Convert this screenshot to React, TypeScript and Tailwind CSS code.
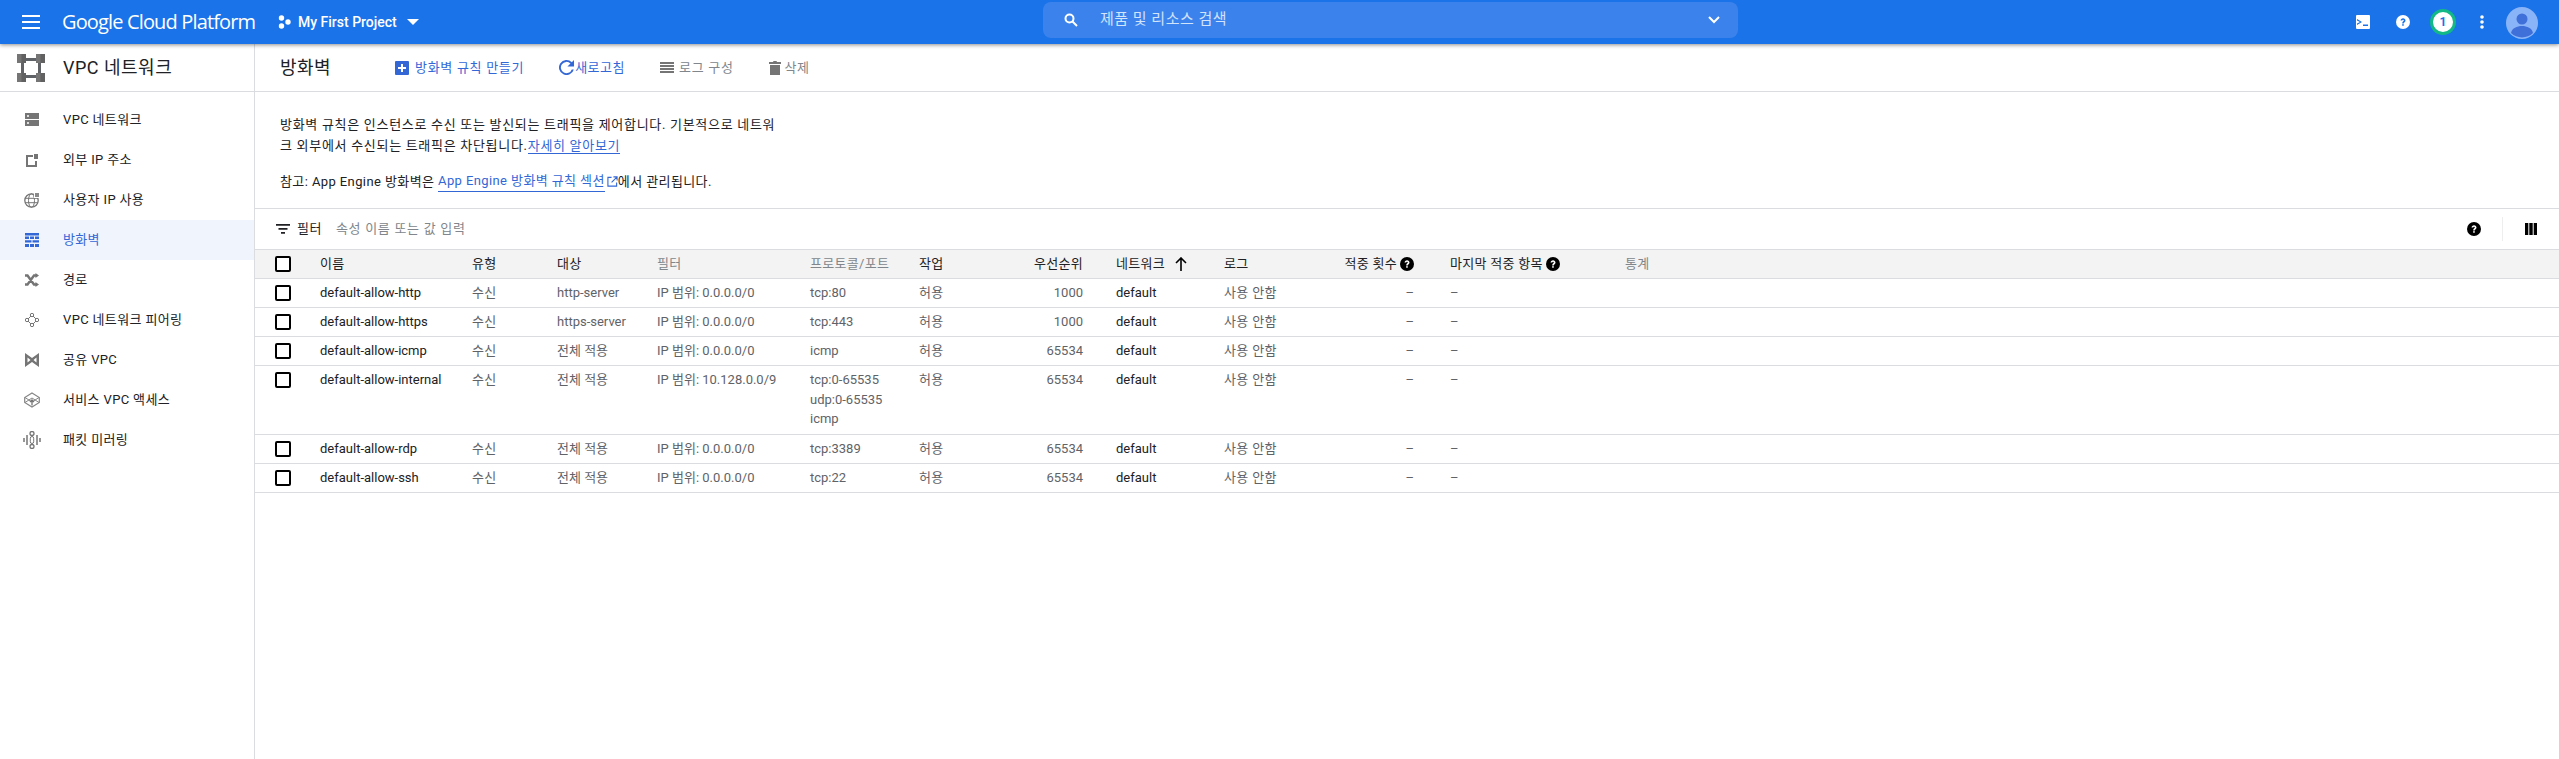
import React from "react";

const font = "font-['Roboto','Noto_Sans_CJK_KR',sans-serif]";
const gridCols = "grid grid-cols-[65px_152px_85px_100px_153px_109px_85px_79px_141px_100px_90px_211px_1fr]";

const Svg = ({ s = 16, vb = "0 0 16 16", c = "", children }: { s?: number; vb?: string; c?: string; children: React.ReactNode }) => (
  <svg width={s} height={s} viewBox={vb} className={`shrink-0 ${c}`}>{children}</svg>
);

const Help = ({ s = 14, fg = "#000", q = "#fff" }: { s?: number; fg?: string; q?: string }) => (
  <svg width={s} height={s} viewBox="0 0 24 24" className="shrink-0">
    <circle cx="12" cy="12" r="12" fill={fg} />
    <path d="M7.800 9.600c0-2.400 1.900-4.200 4.300-4.200s4.200 1.700 4.200 3.900c0 2.800-3 3-3 5.300h-2.700c0-3.400 2.800-3.400 2.800-5.100 0-.9-.5-1.500-1.300-1.500s-1.400.7-1.400 1.600H7.800z" fill={q} />
    <rect x="10.600" y="15.700" width="2.700" height="2.700" fill={q} />
  </svg>
);

const icons: React.ReactNode[] = [
  <Svg key="1" s={14} vb="0 0 14 14">
    <path fillRule="evenodd" d="M0 0h14v6H0zM3 2a1 1 0 1 0 0 2 1 1 0 0 0 0-2zM0 7h14v6H0zM3 9a1 1 0 1 0 0 2 1 1 0 0 0 0-2z" fill="#757575" />
  </Svg>,
  <Svg key="2" s={14} vb="0 0 14 14">
    <path d="M1 2h7v2H3v8h7V8h2v6H1z" fill="#757575" />
    <rect x="9" y="1" width="4" height="5" fill="#757575" />
  </Svg>,
  <Svg key="3" s={16} vb="0 0 16 16">
    <circle cx="7.500" cy="8.500" r="6.700" fill="none" stroke="#757575" strokeWidth="1.300" />
    <ellipse cx="7.500" cy="8.500" rx="3" ry="6.700" fill="none" stroke="#757575" />
    <path d="M1 6.300h13M1 10.700h13" stroke="#757575" />
    <rect x="10" y="0.500" width="5.500" height="5.500" fill="#fff" />
    <rect x="11" y="1" width="4" height="4" fill="#8a8a8a" />
  </Svg>,
  <Svg key="4" s={14} vb="0 0 14 14">
    <path d="M0 0h14v2.400H0zM0 3.600h4v2.400H0zM5 3.600h4v2.400H5zM10 3.600h4v2.400h-4zM0 7.200h6.500v2.400H0zM7.500 7.200H14v2.400H7.500zM0 11h4v3H0zM5 11h4v3H5zM10 11h4v3h-4z" fill="#3367d6" />
  </Svg>,
  <Svg key="5" s={14} vb="0 0 14 14">
    <path d="M0 2.500h2.500L9 11.500h2M0 11.500h2.500L9 2.500h2" fill="none" stroke="#757575" strokeWidth="2.400" />
    <path d="M10.500 0 14 2.500 10.500 5zM10.500 9 14 11.500 10.500 14z" fill="#757575" />
  </Svg>,
  <Svg key="6" s={14} vb="0 0 14 14">
    <path d="M7 2 12 7 7 12 2 7z" fill="none" stroke="#757575" />
    <circle cx="7" cy="2" r="1.700" fill="#fff" stroke="#757575" />
    <circle cx="12" cy="7" r="1.700" fill="#fff" stroke="#757575" />
    <circle cx="7" cy="12" r="1.700" fill="#fff" stroke="#757575" />
    <circle cx="2" cy="7" r="1.700" fill="#fff" stroke="#757575" />
  </Svg>,
  <Svg key="7" s={14} vb="0 0 14 14">
    <path fillRule="evenodd" d="M0 0 7 5 14 0v14L7 9 0 14zM2.500 4.500v5L5.500 7zM11.500 4.500 8.500 7l3 2.500z" fill="#757575" />
  </Svg>,
  <Svg key="8" s={16} vb="0 0 16 16">
    <path d="M8 1 15.300 5.500v5L8 15 .7 10.500v-5z" fill="none" stroke="#858585" strokeWidth="1.200" />
    <path d="M1 5.500 8 10l7-4.500M1 10.500 8 6l7 4.500" fill="none" stroke="#858585" strokeWidth="1" />
    <path d="M8 13.500V8M6 10l2-2 2 2" fill="none" stroke="#757575" strokeWidth="1.300" />
  </Svg>,
  <Svg key="9" s={18} vb="0 0 18 18">
    <circle cx="9" cy="2.500" r="2" fill="none" stroke="#757575" strokeWidth="1.300" />
    <circle cx="9" cy="15.500" r="2" fill="none" stroke="#757575" strokeWidth="1.300" />
    <rect x="7.300" y="5.500" width="3.400" height="7" rx="1.700" fill="none" stroke="#757575" />
    <path d="M1 7v4M4 4v10M14 4v10M17 7v4" stroke="#757575" strokeWidth="1.500" />
  </Svg>,
];

const navItems = ["VPC 네트워크", "외부 IP 주소", "사용자 IP 사용", "방화벽", "경로", "VPC 네트워크 피어링", "공유 VPC", "서비스 VPC 액세스", "패킷 미러링"];

type Row = { name: string; target: string; filter: string; proto: string[]; pr: string };
const rows: Row[] = [
  { name: "default-allow-http", target: "http-server", filter: "IP 범위: 0.0.0.0/0", proto: ["tcp:80"], pr: "1000" },
  { name: "default-allow-https", target: "https-server", filter: "IP 범위: 0.0.0.0/0", proto: ["tcp:443"], pr: "1000" },
  { name: "default-allow-icmp", target: "전체 적용", filter: "IP 범위: 0.0.0.0/0", proto: ["icmp"], pr: "65534" },
  { name: "default-allow-internal", target: "전체 적용", filter: "IP 범위: 10.128.0.0/9", proto: ["tcp:0-65535", "udp:0-65535", "icmp"], pr: "65534" },
  { name: "default-allow-rdp", target: "전체 적용", filter: "IP 범위: 0.0.0.0/0", proto: ["tcp:3389"], pr: "65534" },
  { name: "default-allow-ssh", target: "전체 적용", filter: "IP 범위: 0.0.0.0/0", proto: ["tcp:22"], pr: "65534" },
];

const Check = () => <div className="ml-5 h-4 w-4 rounded-[2px] border-2 border-black bg-white" />;

export default function App() {
  return (
    <div className={`${font} flex h-[759px] w-[2559px] flex-col overflow-hidden bg-white text-[13px] text-[#202124]`}>
      <header className="relative z-10 flex h-11 shrink-0 items-center bg-[#1a73e8] text-white shadow-[0_1px_4px_rgba(0,0,0,0.45)]">
        <div className="flex w-[1043px] shrink-0 items-center">
          <svg width="18" height="14" viewBox="0 0 18 14" className="ml-[22px]"><path d="M0 0h18v2H0zM0 6h18v2H0zM0 12h18v2H0z" fill="#fff" /></svg>
          <span className="ml-[22px] w-[192px] text-[20px] leading-6 font-['Open_Sans',sans-serif] tracking-[-0.85px] whitespace-nowrap">Google Cloud Platform</span>
          <svg width="14" height="14" viewBox="0 0 14 14" className="ml-6"><circle cx="3.500" cy="3" r="2.700" fill="#fff" /><circle cx="3.500" cy="11" r="2.700" fill="#fff" /><circle cx="10" cy="7" r="2.700" fill="#fff" /></svg>
          <span className="ml-[6px] text-[14px] font-medium whitespace-nowrap">My First Project</span>
          <svg width="12" height="6" viewBox="0 0 12 6" className="ml-[10px]"><path d="M0 0h12L6 6z" fill="#fff" /></svg>
        </div>
        <div className="mb-[5px] flex h-9 w-[695px] items-center rounded-lg bg-[#3b82ec] pl-[21px] pr-[18px]">
          <svg width="14" height="14" viewBox="0 0 14 14"><circle cx="5.500" cy="5.500" r="4" fill="none" stroke="#fff" strokeWidth="2" /><path d="M8.500 8.500 13 13" stroke="#fff" strokeWidth="2" /></svg>
          <span className="ml-[22px] text-[15px] tracking-[0.5px] text-[#d2e3fc]">제품 및 리소스 검색</span>
          <svg width="12" height="8" viewBox="0 0 12 8" className="ml-auto"><path d="M1 1l5 5 5-5" fill="none" stroke="#fff" strokeWidth="2" /></svg>
        </div>
        <div className="ml-[618px] flex items-center">
          <svg width="14" height="14" viewBox="0 0 14 14"><path fillRule="evenodd" d="M1 0h12a1 1 0 0 1 1 1v12a1 1 0 0 1-1 1H1a1 1 0 0 1-1-1V1a1 1 0 0 1 1-1zM1 4v1.500L4 7 1 8.500V10l5-3zM7 9.500V11h5V9.500z" fill="#fff" /></svg>
          <div className="ml-[26px]"><Help s={14} fg="#fff" q="#1a73e8" /></div>
          <div className="ml-[20px] flex h-[26px] w-[26px] items-center justify-center rounded-full border-[3px] border-[#12b886] bg-white text-[12px] font-bold text-[#1a73e8]">1</div>
          <svg width="4" height="14" viewBox="0 0 4 14" className="ml-[24px]"><circle cx="2" cy="2" r="1.800" fill="#fff" /><circle cx="2" cy="7" r="1.800" fill="#fff" /><circle cx="2" cy="12" r="1.800" fill="#fff" /></svg>
          <svg width="32" height="32" viewBox="0 0 32 32" className="ml-[22px] mt-[2px]"><circle cx="16" cy="16" r="16" fill="#8ab4f8" /><circle cx="16" cy="12" r="5.500" fill="#3f6fd8" /><path d="M5 26c1-5 6-7 11-7s10 2 11 7a16 16 0 0 1-22 0z" fill="#3f6fd8" /></svg>
        </div>
      </header>

      <div className="flex min-h-0 flex-1">
        <aside className="w-[255px] shrink-0 border-r border-[#dadce0]">
          <div className="flex h-[48px] items-center border-b border-[#dadce0]">
            <svg width="28" height="28" viewBox="0 0 28 28" className="ml-[17px]">
              <path d="M4 7h3v14H4zM21 7h3v14h-3zM7 4h14v3H7zM7 21h14v3H7z" fill="#5f6368" />
              <path d="M0 0h9v9H0zM19 0h9v9h-9zM0 19h9v9H0zM19 19h9v9h-9z" fill="#757575" />
              <path d="M4.500 0H9v9H4.500zM23.500 0H28v9h-4.500zM4.500 19H9v9H4.500zM23.500 19H28v9h-4.500z" fill="#616161" />
            </svg>
            <span className="ml-[18px] text-[18px] leading-6 tracking-[0.5px]">VPC 네트워크</span>
          </div>
          <nav className="pt-2">
            {navItems.map((t, i) => (
              <div key={t} className={`flex h-10 items-center ${i === 3 ? "bg-[#f0f4fd] text-[#3367d6]" : ""}`}>
                <div className="flex w-[63px] shrink-0 justify-center">{icons[i]}</div>
                <span className="tracking-[0.35px]">{t}</span>
              </div>
            ))}
          </nav>
        </aside>

        <main className="min-w-0 flex-1">
          <div className="flex h-[48px] items-center border-b border-[#dadce0] pl-[25px]">
            <span className="w-[115px] text-[18px] leading-6 tracking-[0.5px]">방화벽</span>
            <div className="flex items-center text-[#3367d6]">
              <svg width="14" height="14" viewBox="0 0 14 14"><rect width="14" height="14" rx="1" fill="#3367d6" /><path d="M6 3h2v3h3v2H8v3H6V8H3V6h3z" fill="#fff" /></svg>
              <span className="ml-[6px] tracking-[0.7px]">방화벽 규칙 만들기</span>
            </div>
            <div className="ml-[35px] flex items-center text-[#3367d6]">
              <svg width="15" height="15" viewBox="4 4 16 16"><path d="M17.650 6.350A8 8 0 1 0 19.750 14h-2.100a6 6 0 1 1-1.410-6.240L13 11h7V4z" fill="#3367d6" /></svg>
              <span className="ml-px tracking-[0.5px]">새로고침</span>
            </div>
            <div className="ml-[35px] flex items-center text-[#80868b]">
              <svg width="14" height="11" viewBox="0 0 14 11"><path d="M0 0h14v2H0zM0 3h14v2H0zM0 6h14v2H0zM0 9h14v2H0z" fill="#757575" /></svg>
              <span className="ml-[5px] tracking-[0.7px]">로그 구성</span>
            </div>
            <div className="ml-[35px] flex items-center text-[#80868b]">
              <svg width="12" height="14" viewBox="0 0 12 14"><path d="M1 4h10v10H1zM0 1h4l.5-1h3L8 1h4v2H0z" fill="#757575" /></svg>
              <span className="ml-[4px] tracking-[0.5px]">삭제</span>
            </div>
          </div>

          <div className="h-[117px] border-b border-[#dadce0] pl-[25px] pt-[22px] leading-[21px]">
            <p className="w-[505px] tracking-[0.7px]">방화벽 규칙은 인스턴스로 수신 또는 발신되는 트래픽을 제어합니다. 기본적으로 네트워크 외부에서 수신되는 트래픽은 차단됩니다.<a className="border-b border-[#3367d6] text-[#3367d6]">자세히 알아보기</a></p>
            <p className="mt-[14px] flex items-center tracking-[0.4px]">
              참고: App Engine 방화벽은&nbsp;<a className="border-b border-[#3367d6] text-[#3367d6]">App Engine 방화벽 규칙 섹션</a>
              <svg width="11" height="11" viewBox="0 0 12 12" className="ml-[2px]"><path d="M5 1.500H1v9.500h9.500V7M7 1h4v4M11 1 5 7" fill="none" stroke="#3367d6" strokeWidth="1.200" /></svg>
              에서 관리됩니다.
            </p>
          </div>

          <div className="flex h-[40px] items-center pl-[21px]">
            <svg width="14" height="10" viewBox="0 0 14 10"><path d="M0 0h14v1.800H0zM2.500 4h9v1.800h-9zM5 8h4v1.800H5z" fill="#202124" /></svg>
            <span className="ml-[7px] tracking-[0.5px]">필터</span>
            <span className="ml-[14px] tracking-[0.7px] text-[#80868b]">속성 이름 또는 값 입력</span>
            <div className="ml-auto flex items-center">
              <Help s={14} />
              <div className="ml-[21px] h-6 w-px bg-[#eeeeee]" />
              <svg width="12" height="12" viewBox="0 0 12 12" className="ml-[22px] mr-[22px]"><path d="M0 0h3.300v12H0zM4.300 0h3.400v12H4.300zM8.700 0H12v12H8.700z" fill="#000" /></svg>
            </div>
          </div>

          <div className={`${gridCols} h-[30px] items-center border-y border-[#dadce0] bg-[#f3f3f3] tracking-[0.3px]`}>
            <Check />
            <span>이름</span>
            <span>유형</span>
            <span>대상</span>
            <span className="text-[#80868b]">필터</span>
            <span className="text-[#80868b]">프로토콜/포트</span>
            <span>작업</span>
            <span className="text-right">우선순위</span>
            <span className="flex items-center pl-[33px]">네트워크
              <svg width="12" height="14" viewBox="0 0 12 14" className="ml-[10px]"><path d="M6 1v13M1 6l5-5 5 5" fill="none" stroke="#000" strokeWidth="1.600" /></svg>
            </span>
            <span>로그</span>
            <span className="flex items-center justify-end gap-[3px] whitespace-nowrap">적중 횟수<Help s={14} /></span>
            <span className="flex items-center gap-[3px] pl-[36px] whitespace-nowrap">마지막 적중 항목<Help s={14} /></span>
            <span className="text-[#80868b]">통계</span>
          </div>

          {rows.map((r) => (
            <div key={r.name} className={`${gridCols} items-start border-b border-[#dadce0] pt-[4px] leading-[19.5px] ${r.proto.length > 1 ? "h-[69px]" : "h-[29px]"}`}>
              <div className="pt-[2px]"><Check /></div>
              <span>{r.name}</span>
              <span className="tracking-[0.35px] text-[#5f6368]">수신</span>
              <span className="text-[#5f6368]">{r.target}</span>
              <span className="text-[#5f6368]">{r.filter}</span>
              <div className="text-[#5f6368]">{r.proto.map((p) => <div key={p}>{p}</div>)}</div>
              <span className="tracking-[0.35px] text-[#5f6368]">허용</span>
              <span className="text-right text-[#5f6368]">{r.pr}</span>
              <span className="pl-[33px]">default</span>
              <span className="tracking-[0.35px] text-[#5f6368]">사용 안함</span>
              <span className="text-right text-[#5f6368]">–</span>
              <span className="pl-[36px] text-[#5f6368]">–</span>
              <span />
            </div>
          ))}
        </main>
      </div>
    </div>
  );
}
